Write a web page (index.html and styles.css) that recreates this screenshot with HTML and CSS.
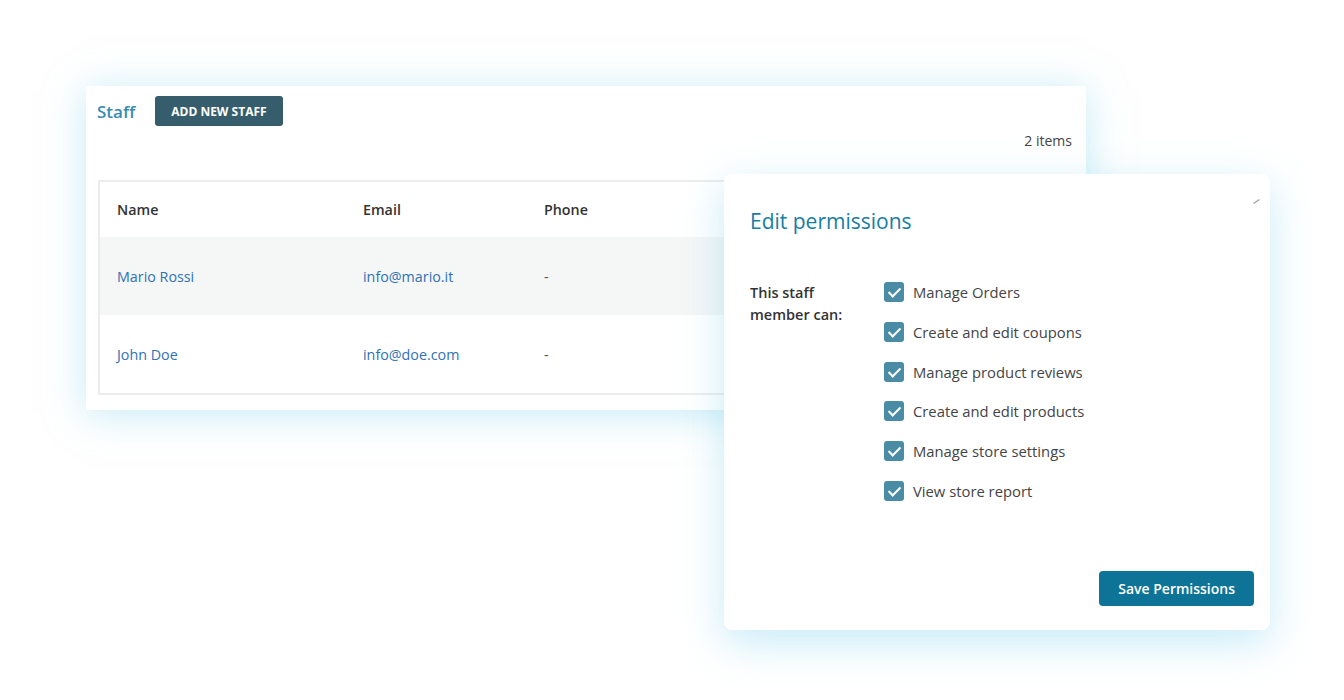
FILE: index.html
```html
<!DOCTYPE html>
<html lang="en">
<head>
    <meta charset="UTF-8">
    <meta name="viewport" content="width=device-width, initial-scale=1.0">
    <title>Staff permissions</title>
    <link rel="stylesheet" href="styles.css">
</head>
<body>

    <div class="page">
        <div class="staff-card">
            <div class="staff-head">
                <h2>Staff</h2>
                <button class="btn-add">ADD NEW STAFF</button>
            </div>
            <div class="count">2 items</div>
            <table class="staff-table">
                <thead>
                    <tr><th>Name</th><th>Email</th><th>Phone</th><th></th></tr>
                </thead>
                <tbody>
                    <tr class="shaded"><td class="link">Mario Rossi</td><td class="link">info@mario.it</td><td>-</td><td></td></tr>
                    <tr><td class="link">John Doe</td><td class="link">info@doe.com</td><td>-</td><td></td></tr>
                </tbody>
            </table>
        </div>

        <!-- modal sopra la tabella -->
        <div class="modal">
            <span class="close-mark"></span>
            <h3>Edit permissions</h3>
            <div class="perm-body">
                <div class="perm-label">This staff<br>member can:</div>
                <ul class="perm-list">
                    <li><span class="check"></span>Manage Orders</li>
                    <li><span class="check"></span>Create and edit coupons</li>
                    <li><span class="check"></span>Manage product reviews</li>
                    <li><span class="check"></span>Create and edit products</li>
                    <li><span class="check"></span>Manage store settings</li>
                    <li><span class="check"></span>View store report</li>
                </ul>
            </div>
            <div class="modal-foot">
                <button class="btn-save">Save Permissions</button>
            </div>
        </div>
    </div>

</body>
</html>
```

FILE: styles.css
```css
body {
    margin: 0;
    font-family: "Open Sans", "Noto Sans", Arial, sans-serif;
    background-color: #fff;
    color: #333;
}
.page {
    position: relative;
    width: 1344px;
    height: 700px;
    padding: 86px 0 0 86px;
    box-sizing: border-box;
}
.staff-card {
    width: 1000px;
    height: 324px;
    box-sizing: border-box;
    background-color: #fff;
    padding: 10px 14px 0 12px;
    box-shadow: 0 4px 36px rgba(140, 215, 240, 0.5);
}
.staff-head {
    display: flex;
    align-items: center;
    gap: 20px;
}
.staff-head h2 {
    margin: 0 0 0 -1px;
    font-size: 17px;
    font-weight: 600;
    color: #3a8bb4;
}
.btn-add {
    height: 30px;
    padding: 0 16px;
    background-color: #365d6b;
    color: #fff;
    border: none;
    border-radius: 3px;
    font-family: inherit;
    font-size: 12px;
    font-weight: 700;
}
.count {
    text-align: right;
    font-size: 14px;
    color: #444;
    margin-top: 3px;
    height: 24px;
    line-height: 24px;
}
.staff-table {
    margin-top: 27px;
    width: 100%;
    border-collapse: collapse;
    border: 2px solid #ececec;
    font-size: 14.3px;
}
.staff-table th {
    text-align: left;
    font-weight: 600;
    color: #333;
    height: 55px;
    padding: 0 0 0 17px;
}
.staff-table td {
    height: 78px;
    padding: 0 0 0 17px;
    color: #555;
}
.staff-table th:nth-child(1) { width: 229px; }
.staff-table th:nth-child(2) { width: 164px; }
.staff-table th:nth-child(3) { width: 160px; }
.staff-table tr.shaded td {
    background-color: #f5f6f6;
}
.staff-table td.link {
    color: #2f72b8;
}
.modal {
    position: absolute;
    left: 724px;
    top: 174px;
    width: 546px;
    height: 456px;
    box-sizing: border-box;
    background-color: #fff;
    border-radius: 8px;
    padding: 32px 16px 0 26px;
    box-shadow: 0 12px 40px rgba(130, 210, 240, 0.45);
}
.close-mark {
    position: absolute;
    right: 10px;
    top: 27px;
    width: 7px;
    height: 1px;
    background-color: #999;
    transform: rotate(-35deg);
}
.modal h3 {
    margin: 0;
    font-size: 21px;
    font-weight: 500;
    line-height: 30px;
    color: #157ea3;
}
.perm-body {
    display: flex;
    margin-top: 46px;
}
.perm-label {
    width: 134px;
    font-size: 14.5px;
    font-weight: 600;
    line-height: 22px;
    color: #333;
}
.perm-list {
    list-style: none;
    margin: 0;
    padding: 0;
}
.perm-list li {
    display: flex;
    align-items: center;
    gap: 9px;
    height: 20px;
    margin-bottom: 19.8px;
    font-size: 14.8px;
    color: #444;
}
.check {
    width: 20px;
    height: 20px;
    border-radius: 3px;
    background-color: #4a8ca5;
    position: relative;
}
.check::after {
    content: "";
    position: absolute;
    left: 7px;
    top: 3px;
    width: 5px;
    height: 10px;
    border: solid #fff;
    border-width: 0 2px 2px 0;
    transform: rotate(45deg);
}
.modal-foot {
    display: flex;
    justify-content: flex-end;
    margin-top: 50px;
}
.btn-save {
    height: 35px;
    padding: 0 19px;
    background-color: #0d7497;
    color: #fff;
    border: none;
    border-radius: 4px;
    font-family: inherit;
    font-size: 14px;
    font-weight: 600;
}
```
